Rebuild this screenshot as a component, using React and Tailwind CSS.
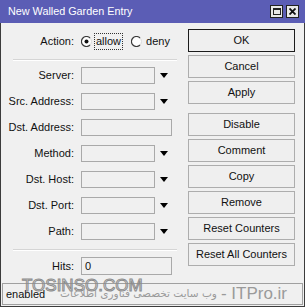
import React from "react";

const Radio = ({ checked }) => (
  <svg width="11" height="11" viewBox="0 0 11 11" className="shrink-0">
    <circle cx="5.5" cy="5.5" r="5" fill="#ffffff" />
    <path d="M9 2 A5 5 0 1 0 9 9" fill="none" stroke="#3a3a3a" strokeWidth="1.2" />
    <path d="M9 2 A5 5 0 0 1 9 9" fill="none" stroke="#d8d8d8" strokeWidth="1" />
    {checked && <circle cx="5.5" cy="5.5" r="2" fill="#111111" />}
  </svg>
);

const Arrow = () => (
  <svg width="8" height="5" viewBox="0 0 8 5" className="ml-[5px] shrink-0">
    <path d="M0 0 H8 L4 5 Z" fill="#000000" />
  </svg>
);

const Field = ({ label, wide, drop }) => (
  <div className="flex items-center h-[17px]">
    <span className="w-[73px] text-right pr-[1px]">{label}</span>
    <div
      className={`ml-[6px] h-[17px] border border-[#a9a9a9] bg-[#f0f0f0] ${wide ? "w-[91px]" : "w-[74px]"}`}
    />
    {drop && <Arrow />}
  </div>
);

const Btn = ({ children, main, className = "" }) => (
  <div
    className={`h-[23px] w-[107px] flex items-center justify-center bg-[#efefef] border ${main ? "border-[#1c1c1c]" : "border-[#adadad]"} ${className}`}
  >
    {children}
  </div>
);

const App = () => {
  return (
    <div className="w-[305px] h-[307px] flex flex-col bg-[#f0f0f0] text-[11px] text-[#111] font-['Liberation_Sans',Arial,sans-serif] relative overflow-hidden">
      {/* title bar */}
      <div className="h-[23px] bg-[#5b5db5] flex items-center pl-[8px] pr-[6px] shrink-0">
        <span className="text-white text-[10.8px]">New Walled Garden Entry</span>
        <div className="ml-auto flex gap-[3px]">
          <div className="w-[13px] h-[13px] bg-[#e9e9e9] border border-[#222] flex items-center justify-center">
            <div className="w-[8px] h-[7px] border border-[#222] border-t-2" />
          </div>
          <div className="w-[13px] h-[13px] bg-[#e9e9e9] border border-[#222] flex items-center justify-center">
            <svg width="7" height="7" viewBox="0 0 7 7">
              <path d="M0.5 0.5 L6.5 6.5 M6.5 0.5 L0.5 6.5" stroke="#111" strokeWidth="1.8" />
            </svg>
          </div>
        </div>
      </div>

      {/* body */}
      <div className="flex-1 flex flex-col border-x border-b border-[#3c3c3c]">
        <div className="flex flex-1">
          {/* left column */}
          <div className="w-[186px] pt-[10px] pl-[1px]">
            <div className="flex items-center h-[17px]">
              <span className="w-[73px] text-right pr-[1px]">Action:</span>
              <div className="ml-[6px] flex items-center">
                <Radio checked />
                <span className="ml-[2px] px-[1px] h-[17px] leading-[15px] border border-dotted border-[#333]">allow</span>
                <span className="ml-[8px]"><Radio /></span>
                <span className="ml-[4px]">deny</span>
              </div>
            </div>

            <div className="ml-[11px] mr-[10px] mt-[9px] border-t border-[#d5d5d5] border-b border-b-white" />

            <div className="flex flex-col gap-[9px] mt-[6px]">
              <Field label="Server:" drop />
              <Field label="Src. Address:" drop />
              <Field label="Dst. Address:" wide />
              <Field label="Method:" drop />
              <Field label="Dst. Host:" drop />
              <Field label="Dst. Port:" drop />
              <Field label="Path:" drop />
            </div>

            <div className="ml-[11px] mr-[10px] mt-[9px] border-t border-[#d5d5d5] border-b border-b-white" />

            <div className="flex items-center h-[18px] mt-[6px]">
              <span className="w-[73px] text-right pr-[1px]">Hits:</span>
              <div className="ml-[6px] h-[18px] w-[91px] border border-[#a9a9a9] bg-[#f0f0f0] flex items-center pl-[3px]">
                0
              </div>
            </div>
          </div>

          {/* right column */}
          <div className="flex flex-col gap-[3px] pt-[6px] ml-[1px]">
            <Btn main>OK</Btn>
            <Btn>Cancel</Btn>
            <Btn>Apply</Btn>
            <Btn className="mt-[6px]">Disable</Btn>
            <Btn>Comment</Btn>
            <Btn>Copy</Btn>
            <Btn>Remove</Btn>
            <Btn>Reset Counters</Btn>
            <Btn>Reset All Counters</Btn>
          </div>
        </div>

        {/* status bar */}
        <div className="h-[22px] mx-[1px] mb-[1px] border border-[#a0a0a0] flex items-center pl-[3px] shrink-0">
          enabled
        </div>
      </div>

      {/* watermark */}
      <div className="absolute left-[22px] top-[277px] text-[17px] leading-none text-transparent [-webkit-text-stroke:1px_#8c8c8c] pointer-events-none">
        TOSINSO.COM
      </div>
      <div className="absolute right-[18px] top-[285px] flex items-center gap-[4px] text-[#9a9a9a] pointer-events-none">
        <span dir="rtl" className="text-[10.5px] font-['DejaVu_Sans',sans-serif]">وب سایت تخصصی فناوری اطلاعات</span>
        <span className="text-[17px] leading-none">- ITPro.ir</span>
      </div>
    </div>
  );
};

export default App;
